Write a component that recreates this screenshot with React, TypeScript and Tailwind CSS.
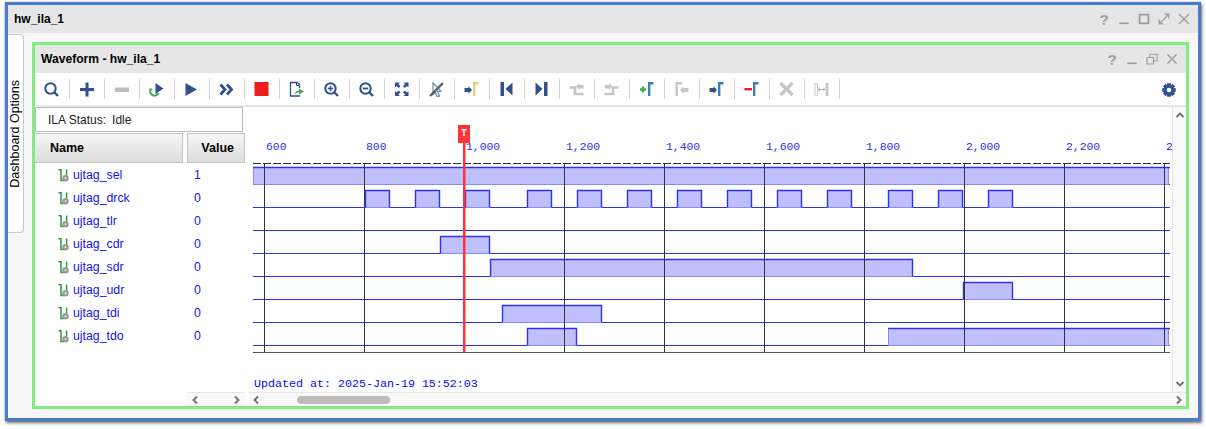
import type { ReactNode } from "react";

const NAVY = "#31508f";
const GRAY = "#c6c6c6";
const STEEL = "#3a7fb5";

const signals = [
  { name: "ujtag_sel", value: 1, low: 184, high: [[253, 1168]] },
  {
    name: "ujtag_drck",
    value: 0,
    low: 207,
    high: [
      [365, 389], [415, 439], [465, 489], [527, 551], [577, 601], [627, 651], [677, 701],
      [727, 751], [777, 801], [827, 851], [888, 912], [938, 962], [988, 1012],
    ],
  },
  { name: "ujtag_tlr", value: 0, low: 230, high: [] },
  { name: "ujtag_cdr", value: 0, low: 253, high: [[440, 489]] },
  { name: "ujtag_sdr", value: 0, low: 276, high: [[490, 912]] },
  { name: "ujtag_udr", value: 0, low: 299, high: [[963, 1012]] },
  { name: "ujtag_tdi", value: 0, low: 322, high: [[502, 601]] },
  { name: "ujtag_tdo", value: 0, low: 345, high: [[527, 576], [888, 1168]] },
];

const ticks = ["600", "800", "1,000", "1,200", "1,400", "1,600", "1,800", "2,000", "2,200", "2"];
const gridX = [264, 364, 464, 564, 664, 764, 864, 964, 1064, 1164];

function Glass({ children }: { children?: ReactNode }) {
  return (
    <>
      <circle cx="8.5" cy="9.5" r="5.2" fill="none" stroke={NAVY} strokeWidth="2" />
      <path d="M12.5 13.5L16 17" stroke={NAVY} strokeWidth="2.4" />
      {children}
    </>
  );
}

function Bracket({ color, x = 11 }: { color: string; x?: number }) {
  return <path d={`M${x + 1.2} 17V4.2H16.5`} fill="none" stroke={color} strokeWidth="2.4" />;
}

function ArrowRight({ color = NAVY }: { color?: string }) {
  return <path d="M2.5 9H6.5V7.2L10 11L6.5 14.8V13H2.5Z" fill={color} />;
}

const tools: ReactNode[] = [
  <Glass />,
  <path d="M3 10.5H17M10 3.5V17.5" stroke={NAVY} strokeWidth="3" />,
  <rect x="3" y="8.5" width="14" height="4.5" fill="#bdbdbd" />,
  <>
    <path d="M3.5 10.5A4.3 4.3 0 1 0 11.5 14" fill="none" stroke="#3fae49" strokeWidth="2" />
    <path d="M2 9.5H5.8L3.6 12.5Z" fill="#3fae49" />
    <path d="M8.5 4L16.5 9.5L8.5 15Z" fill={NAVY} />
  </>,
  <path d="M3.5 4L15 10.5L3.5 17Z" fill={NAVY} />,
  <path d="M3.5 5.5L8 10.5L3.5 15.5M10 5.5L14.5 10.5L10 15.5" fill="none" stroke={NAVY} strokeWidth="2.8" />,
  <rect x="2.5" y="3" width="14" height="14" fill="#ee1c1c" />,
  <>
    <path d="M12.5 9V5.5L10 3.5H3.5V17H13" fill="none" stroke={NAVY} strokeWidth="1.3" />
    <path d="M9.5 3.5V6.5H12.5" fill="none" stroke={NAVY} strokeWidth="1" />
    <path d="M7.5 15.5C8 12.5 10 11.5 12 11.5V9.5L16.8 12.5L12 15.5V13.5C10 13.5 9 14 7.5 15.5Z" fill="#3fae49" />
  </>,
  <Glass>
    <path d="M5.8 9.5H11.2M8.5 6.8V12.2" stroke={NAVY} strokeWidth="1.6" />
  </Glass>,
  <Glass>
    <path d="M5.8 9.5H11.2" stroke={NAVY} strokeWidth="1.8" />
  </Glass>,
  <>
    <path d="M3 3.5H8L6.4 5.1L8.5 7.2L6.7 9L4.6 6.9L3 8.5Z" fill={NAVY} />
    <path d="M16.5 3.5H11.5L13.1 5.1L11 7.2L12.8 9L14.9 6.9L16.5 8.5Z" fill={NAVY} />
    <path d="M3 17H8L6.4 15.4L8.5 13.3L6.7 11.5L4.6 13.6L3 12Z" fill={NAVY} />
    <path d="M16.5 17H11.5L13.1 15.4L11 13.3L12.8 11.5L14.9 13.6L16.5 12Z" fill={NAVY} />
  </>,
  <>
    <path d="M6 4L14 12L10.5 12.5L12.5 17L10 17.5L8.5 13.5L6 15.5Z" fill="none" stroke="#5d7fb5" strokeWidth="1.1" />
    <path d="M3 17L16 4" stroke="#5f5f5f" strokeWidth="2.4" />
  </>,
  <>
    <ArrowRight />
    <Bracket color="#e8d27a" />
  </>,
  <path d="M3.5 3H7V17H3.5ZM15.5 3.5V16.5L8.5 10Z" fill={NAVY} />,
  <path d="M12 3H15.5V17H12ZM3.5 3.5V16.5L10.5 10Z" fill={NAVY} />,
  <>
    <path d="M2.5 8.5H8V15H16.5" fill="none" stroke={GRAY} strokeWidth="2.6" />
    <path d="M9 7.5L12.5 4V6H16.5V9.5H12.5V11Z" fill={GRAY} />
  </>,
  <>
    <path d="M2.5 15H11V8.5H16.5" fill="none" stroke={GRAY} strokeWidth="2.6" />
    <path d="M10.5 7.5L7 4V6H3V9.5H7V11Z" fill={GRAY} />
  </>,
  <>
    <path d="M3 10.5H9M6 7.5V13.5" stroke="#3fae49" strokeWidth="2.4" />
    <Bracket color={STEEL} />
  </>,
  <>
    <path d="M4.7 17V4.2H10" fill="none" stroke={GRAY} strokeWidth="2.4" />
    <path d="M8 11L11.5 7.2V9H16.5V13H11.5V14.8Z" fill={GRAY} />
  </>,
  <>
    <ArrowRight />
    <Bracket color={STEEL} />
  </>,
  <>
    <rect x="2.5" y="9" width="7.5" height="2.4" fill="#ee1c2c" />
    <Bracket color={STEEL} />
  </>,
  <path d="M3.5 4L15.5 16M15.5 4L3.5 16" stroke={GRAY} strokeWidth="3.4" />,
  <>
    <path d="M3 4.5H5.5V16.5H3Z" fill="none" stroke="#cfcfcf" strokeWidth="1" />
    <rect x="13.5" y="4" width="3" height="13" fill={GRAY} />
    <path d="M6 10.5H13M6 10.5L8 8.8M6 10.5L8 12.2M13 10.5L11 8.8M13 10.5L11 12.2" fill="none" stroke="#a9a9a9" strokeWidth="0.9" />
  </>,
];

function Gear() {
  return (
    <svg width="14" height="14" viewBox="0 0 16 16" className="mr-[10px] mt-[1px]">
      {[0, 45, 90, 135].map((r) => (
        <rect key={r} x="5.8" y="0.3" width="4.4" height="15.4" fill={NAVY} transform={`rotate(${r} 8 8)`} />
      ))}
      <circle cx="8" cy="8" r="5.8" fill={NAVY} />
      <circle cx="8" cy="8" r="2.6" fill="#fff" />
    </svg>
  );
}

function WinButton({ kind }: { kind: string }) {
  return (
    <svg width="12" height="12" viewBox="0 0 12 12" fill="none" stroke="#9c9c9c" strokeWidth="1.4">
      {kind === "min" && <path d="M1 10.3H11" strokeWidth="1.6" />}
      {kind === "max" && <rect x="1.6" y="1.6" width="8.8" height="8.8" strokeWidth="1.7" />}
      {kind === "expand" && <path d="M6.5 1.2H10.8V5.5M10.8 1.2L1.2 10.8M1.2 6.5V10.8H5.5" strokeWidth="1.3" />}
      {kind === "restore" && <path d="M1 4.5H7.5V11H1ZM4 4.5V1.2H11V8H7.5" strokeWidth="1.1" />}
      {kind === "close" && <path d="M1.2 1.2L10.8 10.8M10.8 1.2L1.2 10.8" />}
    </svg>
  );
}

function WinControls({ kinds }: { kinds: string[] }) {
  return (
    <div className="flex items-center">
      <span className="w-5 text-center text-[15px] font-bold leading-none text-[#9c9c9c]">?</span>
      {kinds.map((k) => (
        <span key={k} className="flex w-5 justify-center">
          <WinButton kind={k} />
        </span>
      ))}
    </div>
  );
}

function Chevron({ dir }: { dir: "up" | "down" | "left" | "right" }) {
  const d = {
    up: "M1.5 7L5 3.5L8.5 7",
    down: "M1.5 3L5 6.5L8.5 3",
    left: "M7 1.5L3.5 5L7 8.5",
    right: "M3 1.5L6.5 5L3 8.5",
  }[dir];
  return (
    <svg width="10" height="10" viewBox="0 0 10 10">
      <path d={d} fill="none" stroke="#707070" strokeWidth="1.9" />
    </svg>
  );
}

function SignalIcon() {
  return (
    <svg width="11" height="13" viewBox="0 0 11 13" className="shrink-0">
      <path d="M0.5 0.8H3V11.5H6" fill="none" stroke="#2f9a45" strokeWidth="1.5" />
      <path d="M8.6 0.5V6.5" fill="none" stroke="#2f9a45" strokeWidth="1.5" />
      <circle cx="7.5" cy="9.2" r="3.2" fill="#999999" />
      <circle cx="7.5" cy="9.2" r="1" fill="#e6e6e6" />
    </svg>
  );
}

function Waveform() {
  return (
    <svg width="927" height="285" viewBox="245 107 927 285" className="block font-['Liberation_Mono',monospace]">
      {ticks.map((t, i) => (
        <text key={t} x={266 + i * 100} y="150" fontSize="11.4" fill="#3030f0">
          {t}
        </text>
      ))}
      <path d="M253 163.5H1170" stroke="#333" strokeDasharray="8 2" />
      {signals.map((s) => (
        <g key={s.name}>
          <path d={`M253 ${s.low + 0.5}H1170`} stroke="#3030f0" strokeWidth="1.2" />
          {s.high.map(([a, b]) => (
            <rect key={a} x={a + 0.5} y={s.low - 16.5} width={b - a} height="17" fill="#c0c0ff" stroke="#8a8aff" />
          ))}
          {s.high.map(([a, b]) =>
            b === 1168 ? (
              <path key={a} d={`M${a} ${s.low - 16.5}H1170`} fill="none" stroke="#3030f0" strokeWidth="1.5" />
            ) : (
              <path key={a} d={`M${a + 0.5} ${s.low + 0.5}V${s.low - 16.5}H${b + 0.5}V${s.low + 0.5}`} fill="none" stroke="#3030f0" strokeWidth="1.4" />
            ),
          )}
        </g>
      ))}
      {gridX.map((x) => (
        <path key={x} d={`M${x + 0.5} 163V352`} stroke="#333" />
      ))}
      <path d="M253 352.5H1170" stroke="#555" />
      <rect x="463" y="140" width="2.5" height="212" fill="#ff3333" />
      <rect x="458" y="125" width="12" height="18" fill="#ff3333" />
      <text x="464" y="136" fontSize="10" fontWeight="bold" fill="#fff" textAnchor="middle">
        T
      </text>
      <text x="254" y="387" fontSize="11.67" fill="#0808ff">
        Updated at: 2025-Jan-19 15:52:03
      </text>
    </svg>
  );
}

export default function App() {
  return (
    <div className="h-[429px] w-[1206px] overflow-hidden bg-white pl-[5px] pt-[2px] font-['Liberation_Sans',Arial,sans-serif]">
      <div className="flex h-[419px] w-[1196px] flex-col border-[3px] border-[#4a7bcb] bg-[#f7f7f7] shadow-[1px_2px_3px_rgba(0,0,0,0.55),0_0_2px_rgba(0,0,0,0.25)]">
        <div className="flex h-[28px] shrink-0 items-center justify-between bg-[#e6e6e6] pl-[6px] pr-[4px]">
          <span className="text-[12px] font-bold text-black">hw_ila_1</span>
          <WinControls kinds={["min", "max", "expand", "close"]} />
        </div>

        <div className="flex min-h-0 flex-1">
          <div className="mt-[1px] flex h-[199px] w-[16px] shrink-0 items-center justify-center rounded-r-[4px] border border-l-0 border-[#c8c8c8] bg-white">
            <span className="rotate-180 whitespace-nowrap text-[12.5px] text-black [writing-mode:vertical-rl]">
              Dashboard Options
            </span>
          </div>

          <div className="mb-[9px] ml-[8px] mr-[9px] mt-[9px] flex min-w-0 flex-1 flex-col border-[3px] border-[#80ee7c] bg-white">
            <div className="flex h-[28px] shrink-0 items-center justify-between bg-[#e6e6e6] pl-[6px] pr-[4px]">
              <span className="text-[12.1px] font-bold text-black">Waveform - hw_ila_1</span>
              <WinControls kinds={["min", "restore", "close"]} />
            </div>

            <div className="flex h-[34px] shrink-0 items-center justify-between border-b-2 border-[#e6e6e6] bg-white">
              <div className="flex">
                {tools.map((icon, i) => (
                  <div key={i} className="flex h-[20px] w-[35px] items-center justify-center border-r border-[#d4d4d4]">
                    <svg width="20" height="20" viewBox="0 0 20 20">
                      {icon}
                    </svg>
                  </div>
                ))}
              </div>
              <Gear />
            </div>

            <div className="flex min-h-0 flex-1">
              <div className="flex w-[210px] shrink-0 flex-col">
                <div className="flex h-[25px] w-[208px] items-center gap-[6px] border border-[#bdbdbd] pl-[12px] pt-[1px] text-[12px] text-[#222]">
                  <span>ILA Status:</span>
                  <span>Idle</span>
                </div>
                <div className="mt-[1px] flex h-[30px] gap-[4px] text-[12.5px] font-bold text-black">
                  <div className="flex w-[148px] items-center border border-l-0 border-[#c4c4c4] bg-gradient-to-b from-[#f6f6f6] to-[#dddddd] pl-[15px] pt-[1px]">
                    Name
                  </div>
                  <div className="flex w-[58px] items-center justify-end border border-[#c4c4c4] bg-gradient-to-b from-[#f6f6f6] to-[#dddddd] pr-[10px] pt-[1px]">
                    Value
                  </div>
                </div>
                <div className="pt-[1px]">
                  {signals.map((s) => (
                    <div key={s.name} className="flex h-[23px] items-center pl-[23px] text-[12.3px] text-[#1414f0]">
                      <SignalIcon />
                      <span className="ml-[4px] w-[121px]">{s.name}</span>
                      <span>{s.value}</span>
                    </div>
                  ))}
                </div>
              </div>

              <div className="min-w-0 flex-1">
                <Waveform />
              </div>

              <div className="flex w-[14px] shrink-0 flex-col items-center justify-between border-l border-[#e6e6e6] bg-[#f9f9f9] py-[3px]">
                <Chevron dir="up" />
                <Chevron dir="down" />
              </div>
            </div>

            <div className="flex h-[14px] shrink-0 bg-white">
              <div className="w-[152px] shrink-0" />
              <div className="flex w-[58px] shrink-0 items-center justify-between border-t border-[#e6e6e6] bg-[#f9f9f9] px-[3px]">
                <Chevron dir="left" />
                <Chevron dir="right" />
              </div>
              <div className="ml-[4px] flex flex-1 items-center border-t border-[#e6e6e6] bg-[#f9f9f9] px-[2px]">
                <Chevron dir="left" />
                <div className="ml-[36px] h-[8px] w-[93px] rounded-full bg-[#bcbcbc]" />
                <div className="flex-1" />
                <Chevron dir="right" />
              </div>
            </div>
          </div>
        </div>
      </div>
    </div>
  );
}
